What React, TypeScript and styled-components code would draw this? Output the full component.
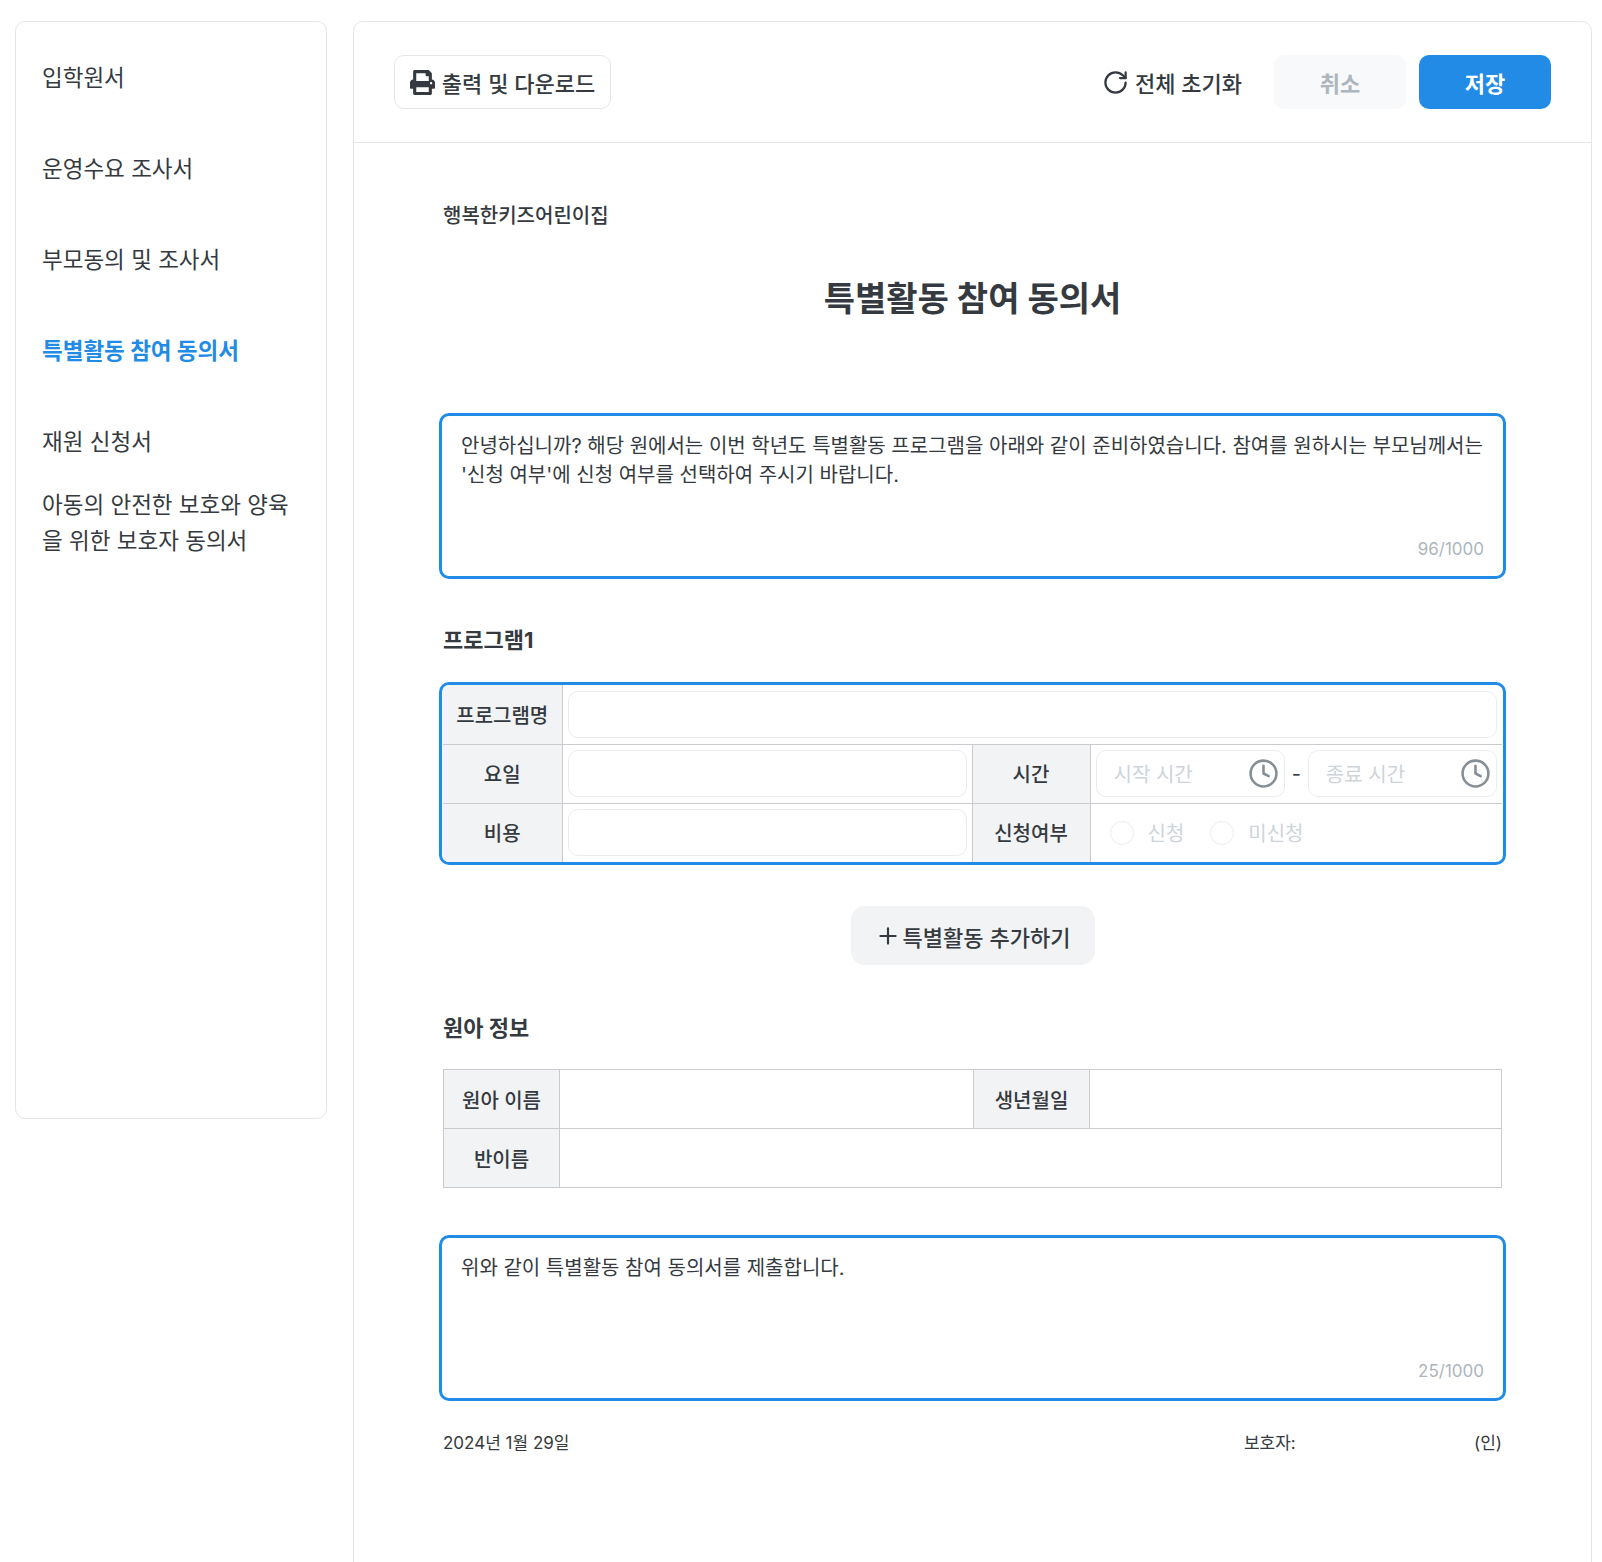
import React from "react";
import styled, { createGlobalStyle } from "styled-components";
import { Clock, Plus, RotateCw } from "lucide-react";
import { FaPrint } from "react-icons/fa";

const Global = createGlobalStyle`
  html, body { margin: 0; padding: 0; background: #fff; }
  body { font-family: Inter, "Noto Sans CJK KR", sans-serif; color: #343a40; height: 1562px; overflow: hidden; }
  * { box-sizing: border-box; }
`;

const Page = styled.div`
  display: flex;
  align-items: flex-start;
  gap: 26px;
  padding: 21px 10px 0 15px;
`;

const Sidebar = styled.nav`
  width: 312px;
  height: 1098px;
  flex: none;
  border: 1px solid #e4e6e8;
  border-radius: 10px;
  padding: 10px 26px;
  display: flex;
  flex-direction: column;
`;

const NavItem = styled.div<{ $active?: boolean; $height?: number }>`
  min-height: ${(p) => p.$height ?? 91}px;
  display: flex;
  align-items: center;
  font-size: 22.5px;
  line-height: 36px;
  color: ${(p) => (p.$active ? "#228be6" : "#343a40")};
  font-weight: ${(p) => (p.$active ? 700 : 400)};
`;

const Main = styled.main`
  flex: 1;
  height: 1600px;
  border: 1px solid #e4e6e8;
  border-radius: 10px;
`;

const Toolbar = styled.header`
  height: 121px;
  border-bottom: 1px solid #e4e6e8;
  padding: 33px 40px 0;
  display: flex;
  align-items: flex-start;
`;

const PrintButton = styled.button`
  width: 217px;
  height: 54px;
  border: 1px solid #e4e6e8;
  border-radius: 10px;
  background: #fff;
  color: #343a40;
  font: 500 22px Inter, "Noto Sans CJK KR", sans-serif;
  display: flex;
  align-items: center;
  justify-content: center;
  gap: 7px;
  padding: 0;
`;

const ResetButton = styled.button`
  margin-left: auto;
  height: 54px;
  border: 0;
  background: none;
  color: #343a40;
  font: 500 22px Inter, "Noto Sans CJK KR", sans-serif;
  display: flex;
  align-items: center;
  gap: 6px;
  padding: 0;
  margin-right: 32px;
`;

const ActionButton = styled.button<{ $primary?: boolean }>`
  width: 132px;
  height: 54px;
  border: 0;
  border-radius: 10px;
  margin-left: ${(p) => (p.$primary ? 13 : 0)}px;
  background: ${(p) => (p.$primary ? "#228be6" : "#f8f9fa")};
  color: ${(p) => (p.$primary ? "#fff" : "#adb5bd")};
  font: 600 22px Inter, "Noto Sans CJK KR", sans-serif;
`;

const Sheet = styled.div`
  padding: 0 89px;
`;

const Org = styled.div`
  font-size: 20px;
  font-weight: 500;
  line-height: 30px;
  margin-top: 58px;
`;

const Title = styled.h1`
  margin: 43px 0 0;
  font-size: 34px;
  line-height: 50px;
  font-weight: 700;
  text-align: center;
`;

const NoteBox = styled.div`
  margin: 0 -4px;
  height: 166px;
  border: 3px solid #228be6;
  border-radius: 10px;
  padding: 16px 19px;
  position: relative;
  font-size: 20px;
  line-height: 29px;
`;

const NoteText = styled.p`
  margin: 0;
`;

const Counter = styled.span`
  position: absolute;
  right: 19px;
  bottom: 15px;
  font-size: 17px;
  line-height: 24px;
  color: #adb5bd;
`;

const FirstNote = styled(NoteBox)`
  margin-top: 89px;
`;

const Heading = styled.h2`
  margin: 44px 0 0;
  font-size: 22px;
  line-height: 34px;
  font-weight: 700;
`;

const FormFrame = styled.div`
  margin: 25px -4px 0;
  border: 3px solid #228be6;
  border-radius: 10px;
  overflow: hidden;
  padding: 0 1px;
`;

const FormTable = styled.table`
  width: 100%;
  border-collapse: collapse;
  table-layout: fixed;
`;

const Label = styled.th`
  height: 59px;
  background: #f1f3f5;
  border: 1px solid #c9cbce;
  font-size: 20px;
  font-weight: 500;
  padding: 0;
  color: #343a40;
`;

const Cell = styled.td`
  height: 59px;
  border: 1px solid #c9cbce;
  padding: 5px;
`;

const FormLabel = styled(Label)`
  &:first-child { border-left: 0; }
  tr:first-child & { border-top: 0; }
  tr:last-child & { border-bottom: 0; }
`;

const FormCell = styled(Cell)`
  &:last-child { border-right: 0; }
  tr:first-child & { border-top: 0; }
  tr:last-child & { border-bottom: 0; }
`;

const Input = styled.div`
  height: 47px;
  width: 100%;
  border: 1px solid #e9ecef;
  border-radius: 10px;
  background: #fff;
`;

const TimeRow = styled.div`
  display: flex;
  align-items: center;
  gap: 7px;
  font-size: 20px;
`;

const TimeInput = styled.div`
  flex: 1;
  height: 47px;
  border: 1px solid #e9ecef;
  border-radius: 10px;
  padding: 0 5px 0 17px;
  display: flex;
  align-items: center;
  justify-content: space-between;
  color: #ced4da;
  font-size: 20px;
  svg { color: #868e96; }
`;

const RadioRow = styled.div`
  display: flex;
  align-items: center;
  padding-left: 14px;
  gap: 26px;
`;

const RadioOption = styled.label`
  display: flex;
  align-items: center;
  gap: 14px;
  font-size: 20px;
  color: #ced4da;
`;

const RadioDot = styled.span`
  width: 24px;
  height: 24px;
  border: 1px solid #e9ecef;
  border-radius: 50%;
`;

const AddRow = styled.div`
  display: flex;
  justify-content: center;
  margin-top: 41px;
`;

const AddButton = styled.button`
  width: 244px;
  height: 59px;
  border: 0;
  border-radius: 14px;
  background: #f1f3f5;
  color: #343a40;
  font: 500 22px Inter, "Noto Sans CJK KR", sans-serif;
  display: flex;
  align-items: center;
  justify-content: center;
  gap: 2px;
  padding: 0;
`;

const InfoHeading = styled(Heading)`
  margin-top: 46px;
`;

const InfoTable = styled(FormTable)`
  margin-top: 24px;
`;

const LastNote = styled(NoteBox)`
  margin-top: 47px;
`;

const SignRow = styled.div`
  display: flex;
  align-items: center;
  margin-top: 29px;
  font-size: 17px;
  line-height: 26px;
`;

const SignDate = styled.span`
  flex: 1;
`;

const SignName = styled.span`
  width: 230px;
`;

export default function App() {
  return (
    <>
      <Global />
      <Page>
        <Sidebar>
          <NavItem>입학원서</NavItem>
          <NavItem>운영수요 조사서</NavItem>
          <NavItem>부모동의 및 조사서</NavItem>
          <NavItem $active>특별활동 참여 동의서</NavItem>
          <NavItem>재원 신청서</NavItem>
          <NavItem $height={72}>아동의 안전한 보호와 양육을 위한 보호자 동의서</NavItem>
        </Sidebar>
        <Main>
          <Toolbar>
            <PrintButton>
              <FaPrint size={25} />
              출력 및 다운로드
            </PrintButton>
            <ResetButton>
              <RotateCw size={27} strokeWidth={2} />
              전체 초기화
            </ResetButton>
            <ActionButton>취소</ActionButton>
            <ActionButton $primary>저장</ActionButton>
          </Toolbar>
          <Sheet>
            <Org>행복한키즈어린이집</Org>
            <Title>특별활동 참여 동의서</Title>
            <FirstNote>
              <NoteText>
                안녕하십니까? 해당 원에서는 이번 학년도 특별활동 프로그램을 아래와 같이 준비하였습니다. 참여를 원하시는 부모님께서는 '신청 여부'에 신청 여부를 선택하여 주시기 바랍니다.
              </NoteText>
              <Counter>96/1000</Counter>
            </FirstNote>
            <Heading>프로그램1</Heading>
            <FormFrame>
              <FormTable>
                <colgroup>
                  <col width="119" />
                  <col width="410" />
                  <col width="118" />
                  <col />
                </colgroup>
                <tbody>
                  <tr>
                    <FormLabel>프로그램명</FormLabel>
                    <FormCell colSpan={3}>
                      <Input />
                    </FormCell>
                  </tr>
                  <tr>
                    <FormLabel>요일</FormLabel>
                    <FormCell>
                      <Input />
                    </FormCell>
                    <FormLabel>시간</FormLabel>
                    <FormCell>
                      <TimeRow>
                        <TimeInput>
                          시작 시간
                          <Clock size={31} strokeWidth={2} />
                        </TimeInput>
                        -
                        <TimeInput>
                          종료 시간
                          <Clock size={31} strokeWidth={2} />
                        </TimeInput>
                      </TimeRow>
                    </FormCell>
                  </tr>
                  <tr>
                    <FormLabel>비용</FormLabel>
                    <FormCell>
                      <Input />
                    </FormCell>
                    <FormLabel>신청여부</FormLabel>
                    <FormCell>
                      <RadioRow>
                        <RadioOption>
                          <RadioDot />
                          신청
                        </RadioOption>
                        <RadioOption>
                          <RadioDot />
                          미신청
                        </RadioOption>
                      </RadioRow>
                    </FormCell>
                  </tr>
                </tbody>
              </FormTable>
            </FormFrame>
            <AddRow>
              <AddButton>
                <Plus size={26} strokeWidth={2} />
                특별활동 추가하기
              </AddButton>
            </AddRow>
            <InfoHeading>원아 정보</InfoHeading>
            <InfoTable>
              <colgroup>
                <col width="116" />
                <col width="414" />
                <col width="116" />
                <col />
              </colgroup>
              <tbody>
                <tr>
                  <Label>원아 이름</Label>
                  <Cell />
                  <Label>생년월일</Label>
                  <Cell />
                </tr>
                <tr>
                  <Label>반이름</Label>
                  <Cell colSpan={3} />
                </tr>
              </tbody>
            </InfoTable>
            <LastNote>
              <NoteText>위와 같이 특별활동 참여 동의서를 제출합니다.</NoteText>
              <Counter>25/1000</Counter>
            </LastNote>
            <SignRow>
              <SignDate>2024년 1월 29일</SignDate>
              <SignName>보호자:</SignName>
              <span>(인)</span>
            </SignRow>
          </Sheet>
        </Main>
      </Page>
    </>
  );
}
